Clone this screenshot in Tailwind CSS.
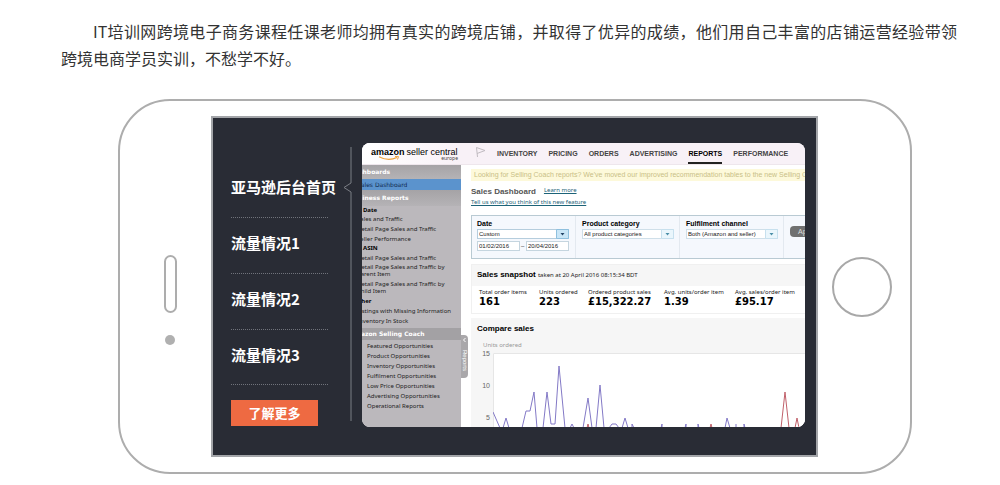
<!DOCTYPE html>
<html lang="zh-CN">
<head>
<meta charset="utf-8">
<meta name="viewport" content="width=device-width, initial-scale=1">
<title>跨境电子商务课程</title>
<script src="https://cdn.jsdelivr.net/npm/@tailwindcss/browser@4"></script>
</head>
<body class="bg-white font-['Liberation_Sans','Noto_Sans_CJK_SC',sans-serif]">
<main class="pt-[18px] pb-3">
  <p class="mr-[43px] ml-[61px] text-base leading-[27px] text-[#333] font-['Noto_Sans_CJK_SC',sans-serif]"><span class="block indent-8 text-justify [text-align-last:justify]">IT培训网跨境电子商务课程任课老师均拥有真实的跨境店铺，并取得了优异的成绩，他们用自己丰富的店铺运营经验带领</span>跨境电商学员实训，不愁学不好。</p>

  <section class="mt-[27px] ml-[118px] mr-[88px] flex rounded-[52px] border-[2px] border-[#adadad] py-[15px]">
    <!-- speaker and camera -->
    <div class="flex w-[91px] shrink-0 flex-col items-center justify-center gap-[22px] pt-[27px] pl-[9px]">
      <span class="h-[58px] w-[13px] rounded-full border-2 border-[#adadad]"></span>
      <span class="size-[10px] rounded-full bg-[#b0b0b0]"></span>
    </div>

    <div class="flex min-w-0 flex-1 border-2 border-[#a3a5a9] bg-[#292c35] pt-[25px] pr-[11px] pb-7 pl-[18px]">
      <nav class="w-[112px] shrink-0 pt-[18px] font-['Noto_Sans_CJK_SC',sans-serif] text-[15px] font-bold text-white">
        <a href="#home" class="flex h-14 items-center pb-1 whitespace-nowrap">亚马逊后台首页</a>
        <a href="#t1" class="flex h-14 w-[97px] items-center border-t border-dotted border-[#70737b] pb-1">流量情况1</a>
        <a href="#t2" class="flex h-14 w-[97px] items-center border-t border-dotted border-[#70737b] pb-1">流量情况2</a>
        <a href="#t3" class="flex h-14 w-[97px] items-center border-y border-dotted border-[#70737b] pb-1">流量情况3</a>
        <button type="button" class="mt-[15px] block h-[26px] w-[87px] bg-[#ee6a42] text-[13px] leading-[26px] font-bold">了解更多</button>
      </nav>
      <svg class="mt-1 h-[274px] w-[9px] shrink-0" viewBox="0 0 9 274" fill="none" stroke="#7b7e85" aria-hidden="true"><path d="M8 0V36L1 40.5L8 45V274"/></svg>

      <!-- seller dashboard -->
      <div class="ml-[10px] flex min-w-0 flex-1 flex-col overflow-hidden rounded-lg bg-white text-[6px] leading-[8px] whitespace-nowrap text-[#222]">
        <header class="flex h-[22px] shrink-0 border-b border-[#eee6ec] bg-[#f8f1f7]">
          <div class="relative w-[99px] shrink-0 bg-gradient-to-r from-white to-[#f8f1f7] pt-1 pl-[9px] text-[9px] leading-[11px] text-black">
            <b>amazon</b><span class="ml-[2px]">seller central</span>
            <svg class="absolute top-[13px] left-4 h-[5px] w-[22px]" viewBox="0 0 22 5" fill="none" stroke="#f0a23a" aria-hidden="true"><path d="M1 .7Q10 5.5 19 1.5" stroke-width="1.3"/><path d="M17 .6L20.5 .6L19.5 3.5"/></svg>
            <span class="absolute top-[12px] right-[3px] font-['Noto_Sans',sans-serif] text-[5px] leading-[6px] text-[#444]">europe</span>
          </div>
          <svg class="mt-[3px] ml-[14px] h-3 w-[11px] shrink-0" viewBox="0 0 11 12" fill="none" stroke="#c1bbc1" aria-hidden="true"><path d="M2.5 11L1.5 1.5L10 4.5L2 7.5"/></svg>
          <nav class="ml-[11px] flex gap-[11px] text-[7px] leading-[21px] font-bold text-[#444]">
            <a href="#inv">INVENTORY</a><a href="#pri">PRICING</a><a href="#ord">ORDERS</a><a href="#adv">ADVERTISING</a><a href="#rep" class="border-b-2 border-[#222] text-black">REPORTS</a><a href="#per">PERFORMANCE</a>
          </nav>
        </header>

        <div class="flex min-h-0 flex-1">
          <aside class="w-[99px] shrink-0 overflow-hidden bg-[#bbb8bc] font-['Noto_Sans',sans-serif]">
            <div class="-ml-3 font-['DejaVu_Sans',sans-serif] font-bold">
              <h3 class="h-[14px] bg-gradient-to-b from-[#a5a3a6] to-[#b5b3b6] leading-[14px] text-white">Dashboards</h3>
            </div>
            <a href="#sd" class="block h-[11px] bg-[#5b93cd] leading-[11px] text-[#102a50]"><span class="-ml-[5px] font-['DejaVu_Sans',sans-serif]">Sales Dashboard</span></a>
            <div class="-ml-3 font-['DejaVu_Sans',sans-serif] font-bold">
              <h3 class="h-4 bg-gradient-to-b from-[#a5a3a6] to-[#b5b3b6] leading-4 text-white">Business Reports</h3>
            </div>
            <h4 class="-ml-2 h-2 font-bold text-black">By Date</h4>
            <ul class="-ml-[5px] leading-[10px]">
              <li><a href="#1">Sales and Traffic</a></li>
              <li><a href="#2">Detail Page Sales and Traffic</a></li>
              <li><a href="#3">Seller Performance</a></li>
            </ul>
            <h4 class="-ml-2 h-[9px] leading-[9px] font-bold text-black">By ASIN</h4>
            <ul class="-ml-[5px] leading-[10px]">
              <li><a href="#4">Detail Page Sales and Traffic</a></li>
              <li class="h-[17px] pt-px leading-[7px]"><a href="#5">Detail Page Sales and Traffic by<br>Parent Item</a></li>
              <li class="h-[17px] pt-px leading-[7px]"><a href="#6">Detail Page Sales and Traffic by<br>Child Item</a></li>
            </ul>
            <h4 class="-ml-2 h-[9px] leading-[9px] font-bold text-black">Other</h4>
            <ul class="-ml-[5px] leading-[10px]">
              <li><a href="#7">Listings with Missing Information</a></li>
              <li><a href="#8">Inventory In Stock</a></li>
            </ul>
            <div class="mt-[2px] -ml-3 font-['DejaVu_Sans',sans-serif] font-bold">
              <h3 class="h-3 bg-[#a3a1a4] leading-3 text-white">Amazon Selling Coach</h3>
            </div>
            <ul class="pt-px pl-[5px] leading-[10px]">
              <li><a href="#9">Featured Opportunities</a></li>
              <li><a href="#10">Product Opportunities</a></li>
              <li><a href="#11">Inventory Opportunities</a></li>
              <li><a href="#12">Fulfilment Opportunities</a></li>
              <li><a href="#13">Low Price Opportunities</a></li>
              <li><a href="#14">Advertising Opportunities</a></li>
              <li><a href="#15">Operational Reports</a></li>
            </ul>
          </aside>

          <div class="relative min-w-0 flex-1 overflow-hidden pt-1 pl-[10px]">
            <button type="button" aria-label="Reports" class="absolute top-[170px] left-0 flex h-[43px] w-[7px] flex-col items-center gap-[8px] rounded-r-sm bg-[#a9a7aa] pt-[3px] text-white">
              <svg class="h-1 w-[3px] shrink-0" viewBox="0 0 3 4" fill="none" stroke="#fff" aria-hidden="true"><path d="M2.5 0L.5 2L2.5 4"/></svg>
              <span class="text-[6px] leading-[7px] [writing-mode:vertical-rl]">Reports</span>
            </button>

            <p class="h-3 overflow-hidden bg-[#fdf9da] pl-[3px] text-[7px] leading-3 text-[#c9bf86]">Looking for Selling Coach reports? We've moved our improved recommendation tables to the new Selling Coach</p>
            <div class="mt-[5px] flex gap-2 leading-[11px]">
              <h1 class="text-[8px] font-bold text-[#555]">Sales Dashboard</h1>
              <a href="#learn" class="font-['Noto_Sans',sans-serif] leading-[9px] text-[#1c6378] underline">Learn more</a>
            </div>
            <a href="#tell" class="block font-['Noto_Sans',sans-serif] leading-[11px] text-[#1c6378] underline">Tell us what you think of this new feature</a>

            <form class="mt-[7px] flex h-11 border-y border-l border-[#b9cad3] bg-[#f5f8fd]">
              <div class="w-[104px] shrink-0 border-r border-[#e3e9f0] pt-[3px] pl-[5px]">
                <label for="date" class="block text-[7px] leading-[9px] font-bold text-black">Date</label>
                <div class="relative mt-px w-[92px]">
                  <select id="date" class="block h-[10px] w-full appearance-none border border-[#b5cddd] bg-white pl-px text-[6px] leading-[8px]"><option>Custom</option></select>
                  <svg class="pointer-events-none absolute top-0 right-0 h-[10px] w-[13px]" viewBox="0 0 13 10" aria-hidden="true"><path d="M.5 .5H12.5V9.5H.5Z" fill="#c9e6f7" stroke="#8fc0de"/><path d="M4.5 4H8.5L6.5 6.5Z" fill="#246"/></svg>
                </div>
                <div class="mt-[2px] flex gap-px">
                  <input aria-label="From" value="01/02/2016" class="h-[10px] w-[43px] border border-[#c5d5df] bg-white px-px text-[6px] leading-[8px]"><span class="w-[4px] leading-[10px]">–</span><input aria-label="To" value="20/04/2016" class="h-[10px] w-[43px] border border-[#c5d5df] bg-white px-px text-[6px] leading-[8px]">
                </div>
              </div>
              <div class="w-[104px] shrink-0 border-r border-[#e3e9f0] pt-[3px] pl-[6px]">
                <label for="cat" class="block text-[7px] leading-[9px] font-bold text-black">Product category</label>
                <div class="relative mt-px w-[92px]">
                  <select id="cat" class="block h-[10px] w-full appearance-none border border-[#cfdfe9] bg-white pl-px text-[6px] leading-[8px]"><option>All product categories</option></select>
                  <svg class="pointer-events-none absolute top-0 right-0 h-[10px] w-[13px]" viewBox="0 0 13 10" aria-hidden="true"><path d="M.5 .5H12.5V9.5H.5Z" fill="#eaf6fc" stroke="#c7e0ee"/><path d="M4.5 4H8.5L6.5 6.5Z" fill="#4a8fa8"/></svg>
                </div>
              </div>
              <div class="w-[104px] shrink-0 border-r border-[#e3e9f0] pt-[3px] pl-[6px]">
                <label for="chan" class="block text-[7px] leading-[9px] font-bold text-black">Fulfilment channel</label>
                <div class="relative mt-px w-[92px]">
                  <select id="chan" class="block h-[10px] w-full appearance-none border border-[#cfdfe9] bg-white pl-px text-[6px] leading-[8px]"><option>Both (Amazon and seller)</option></select>
                  <svg class="pointer-events-none absolute top-0 right-0 h-[10px] w-[13px]" viewBox="0 0 13 10" aria-hidden="true"><path d="M.5 .5H12.5V9.5H.5Z" fill="#eaf6fc" stroke="#c7e0ee"/><path d="M4.5 4H8.5L6.5 6.5Z" fill="#4a8fa8"/></svg>
                </div>
              </div>
              <button type="button" class="mt-[10px] ml-[6px] h-[11px] w-8 shrink-0 rounded-sm bg-[#707070] pl-2 text-left text-[7px] leading-[11px] text-[#ddd]">Apply</button>
            </form>

            <section class="mt-[5px] h-[50px] border border-r-0 border-[#f0f0f0]">
              <h2 class="h-[21px] bg-[#f6f6f6] pl-[5px] text-[8px] leading-[20px] font-bold text-black">Sales snapshot <span class="font-['Noto_Sans',sans-serif] text-[6px] font-normal text-[#222]">taken at 20 April 2016 08:15:34 BDT</span></h2>
              <dl class="flex pt-[2px] pl-[7px] font-['Noto_Sans',sans-serif] [&_dd]:font-['DejaVu_Sans',sans-serif] [&_dd]:text-[10px] [&_dd]:leading-3 [&_dd]:font-bold [&_dd]:text-black">
                <div class="w-[60px] shrink-0"><dt>Total order items</dt><dd>161</dd></div>
                <div class="w-[49px] shrink-0"><dt>Units ordered</dt><dd>223</dd></div>
                <div class="w-[76px] shrink-0"><dt>Ordered product sales</dt><dd>£15,322.27</dd></div>
                <div class="w-[71px] shrink-0"><dt>Avg. units/order item</dt><dd>1.39</dd></div>
                <div class="shrink-0"><dt>Avg. sales/order item</dt><dd>£95.17</dd></div>
              </dl>
            </section>

            <section class="mt-1 bg-[#f6f6f6] pt-[5px]">
              <h2 class="pl-[6px] text-[8px] leading-[11px] font-bold text-black">Compare sales</h2>
              <p class="mt-[7px] pl-3 font-['Noto_Sans',sans-serif] text-[#999]">Units ordered</p>
              <div class="flex pt-[4px]">
                <div class="w-[22px] shrink-0 pr-[3px] text-right text-[7px] leading-[8px] text-[#666]">
                  <p class="-mt-[3px]">15</p><p class="mt-6">10</p><p class="mt-6">5</p>
                </div>
                <svg class="h-[74px] w-[312px] shrink-0 bg-white" viewBox="0 0 312 74" fill="none" stroke-linejoin="round" role="img" aria-label="Units ordered chart">
                  <path d="M.5 75V.5H312" stroke="#e6e6e6"/>
                  <path d="M94 75L95 71L96 75M217 75L218 71L219 75M288 75L292 39L296 75M302 75L304 65L306 75" stroke="#c0606a"/>
                  <path d="M0 59L7 75M10 75L13 65L16 75M29 75L33 58H37L41 39L44 75M50 75L54 39L58 71H62L66 13L72 75M77 75L79 71L81 75M90 75L95 45L99 75M103 75L107 32L111 75M116 75L119 71H123L126 75M129 75L132 65L135 75M139 75V71L141 75M168 75L169 71V75M192 75L193 71V75M205 75V71L206 75M232 75L234 65L237 75M243 75V71M251 75V71L252 75" stroke="#8379c6"/>
                </svg>
              </div>
            </section>
          </div>
        </div>
      </div>
    </div>

    <!-- home button -->
    <div class="flex w-[92px] shrink-0 items-center justify-center pr-1">
      <button type="button" aria-label="Home" class="size-[60px] rounded-full border-2 border-[#a8a8a8]"></button>
    </div>
  </section>
</main>
</body>
</html>
